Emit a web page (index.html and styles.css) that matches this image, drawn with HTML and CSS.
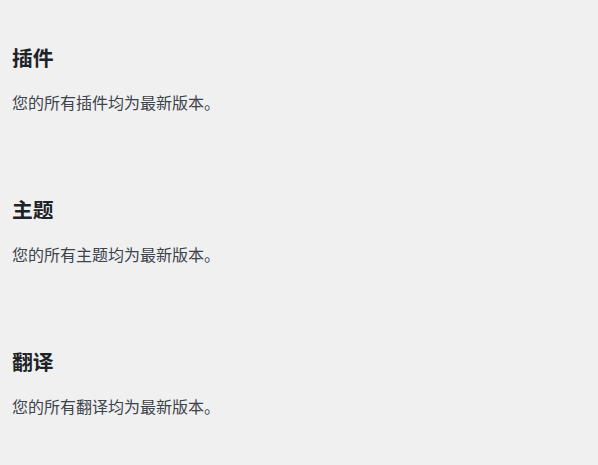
FILE: index.html
```html
<!DOCTYPE html>
<html lang="zh-CN">
<head>
<meta charset="utf-8">
<link rel="stylesheet" href="styles.css">
</head>
<body>
<div class="wrap">
  <section class="block">
    <h2 class="title">插件</h2>
    <p class="msg">您的所有插件均为最新版本。</p>
  </section>
  <section class="block">
    <h2 class="title">主题</h2>
    <p class="msg">您的所有主题均为最新版本。</p>
  </section>
  <section class="block">
    <h2 class="title">翻译</h2>
    <p class="msg">您的所有翻译均为最新版本。</p>
  </section>
</div>
</body>
</html>
```

FILE: styles.css
```css
html, body {
  margin: 0;
  padding: 0;
  background: #f0f0f1;
}
body {
  font-family: "Noto Sans CJK SC", "Noto Sans", sans-serif;
}
.wrap {
  display: flex;
  flex-direction: column;
  gap: 81px;
  padding: 43px 12px 0 12px;
}
.block {
  display: flex;
  flex-direction: column;
  gap: 19px;
}
.title {
  margin: 0;
  font-size: 20.8px;
  line-height: 28px;
  font-weight: 700;
  color: #1d2327;
}
.msg {
  margin: 0;
  font-size: 16px;
  line-height: 24px;
  color: #3c434a;
}
```
